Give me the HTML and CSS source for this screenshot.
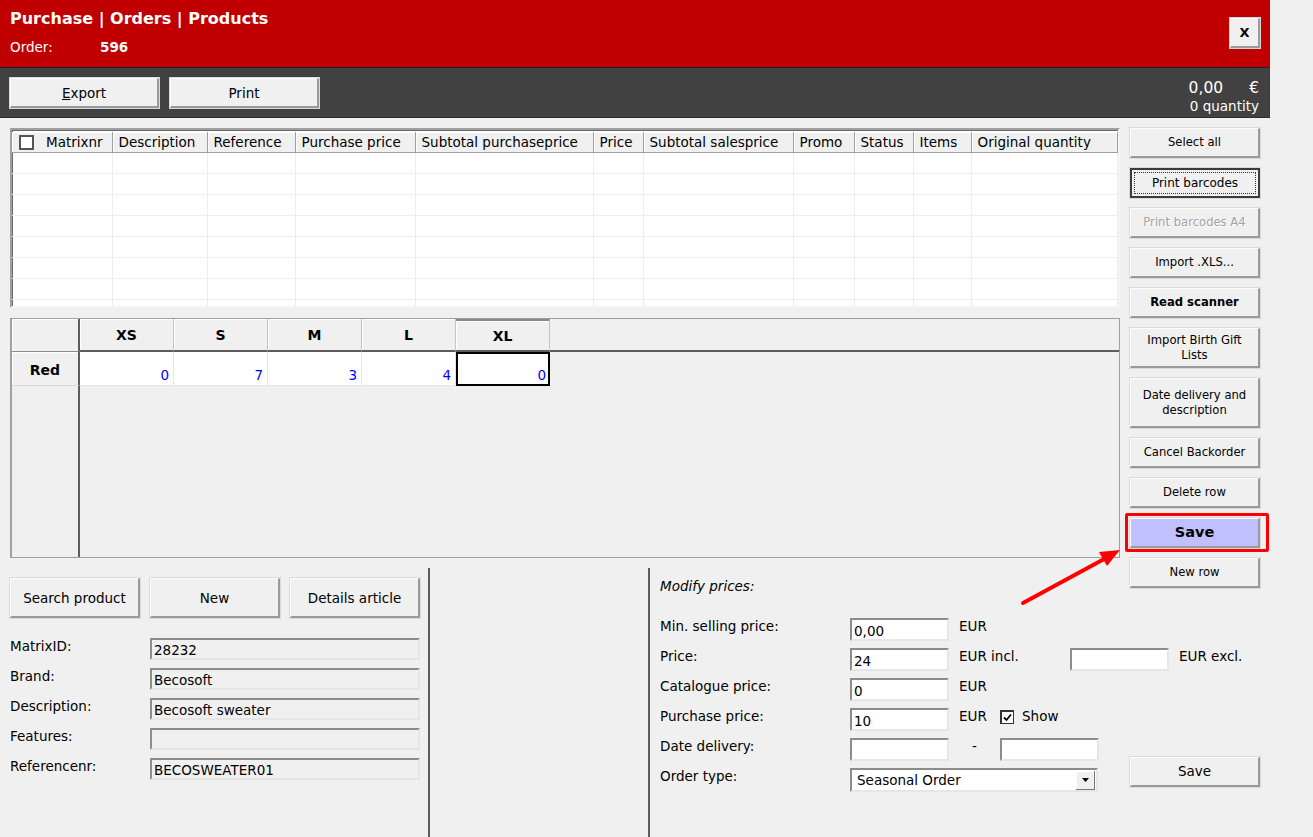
FILE: index.html
```html
<!DOCTYPE html>
<html lang="en">
  <head>
    <meta charset="UTF-8" />
    <meta name="viewport" content="width=device-width, initial-scale=1.0" />
    <link rel="stylesheet" href="styles.css">
  </head>
  <body>
    <div class="window">
      <header class="titlebar">
        <div class="titles">
          <div class="title">Purchase | Orders | Products</div>
          <div class="order"><span class="order-label">Order:</span><b>596</b></div>
        </div>
        <button class="btn close">X</button>
      </header>

      <div class="toolbar">
        <button class="btn wide"><u>E</u>xport</button>
        <button class="btn wide">Print</button>
        <div class="totals">
          <div class="amount"><span>0,00</span><span class="cur">€</span></div>
          <div>0 quantity</div>
        </div>
      </div>

      <main class="content">
        <div class="lines">
          <table class="grid">
            <colgroup>
              <col style="width:100px"><col style="width:95px"><col style="width:88px">
              <col style="width:120px"><col style="width:178px"><col style="width:50px">
              <col style="width:150px"><col style="width:61px"><col style="width:59px">
              <col style="width:58px"><col>
            </colgroup>
            <thead>
              <tr>
                <th class="first"><span class="box"></span>Matrixnr</th>
                <th>Description</th>
                <th>Reference</th>
                <th>Purchase price</th>
                <th>Subtotal purchaseprice</th>
                <th>Price</th>
                <th>Subtotal salesprice</th>
                <th>Promo</th>
                <th>Status</th>
                <th>Items</th>
                <th>Original quantity</th>
              </tr>
            </thead>
            <tbody>
              <tr><td></td><td></td><td></td><td></td><td></td><td></td><td></td><td></td><td></td><td></td><td></td></tr>
              <tr><td></td><td></td><td></td><td></td><td></td><td></td><td></td><td></td><td></td><td></td><td></td></tr>
              <tr><td></td><td></td><td></td><td></td><td></td><td></td><td></td><td></td><td></td><td></td><td></td></tr>
              <tr><td></td><td></td><td></td><td></td><td></td><td></td><td></td><td></td><td></td><td></td><td></td></tr>
              <tr><td></td><td></td><td></td><td></td><td></td><td></td><td></td><td></td><td></td><td></td><td></td></tr>
              <tr><td></td><td></td><td></td><td></td><td></td><td></td><td></td><td></td><td></td><td></td><td></td></tr>
              <tr><td></td><td></td><td></td><td></td><td></td><td></td><td></td><td></td><td></td><td></td><td></td></tr>
              <tr><td></td><td></td><td></td><td></td><td></td><td></td><td></td><td></td><td></td><td></td><td></td></tr>
            </tbody>
          </table>
        </div>

        <div class="tools">
          <button class="btn tool">Select all</button>
          <button class="btn tool focused">Print barcodes</button>
          <button class="btn tool disabled">Print barcodes A4</button>
          <button class="btn tool">Import .XLS...</button>
          <button class="btn tool strong">Read scanner</button>
          <button class="btn tool two">Import Birth Gift Lists</button>
          <button class="btn tool three">Date delivery and description</button>
          <button class="btn tool">Cancel Backorder</button>
          <button class="btn tool">Delete row</button>
          <button class="btn tool save">Save</button>
          <button class="btn tool">New row</button>
        </div>

        <div class="matrix">
          <div class="corner"></div>
          <div class="size">XS</div>
          <div class="size">S</div>
          <div class="size">M</div>
          <div class="size">L</div>
          <div class="size current">XL</div>
          <div class="size-rest"></div>

          <div class="colour">Red</div>
          <div class="qty">0</div>
          <div class="qty">7</div>
          <div class="qty">3</div>
          <div class="qty">4</div>
          <div class="qty active">0</div>
          <div class="qty-rest"></div>

          <div class="colour-rest"></div>
          <div class="empty"></div>
        </div>

        <section class="details">
          <div class="product">
            <div class="product-buttons">
              <button class="btn big">Search product</button>
              <button class="btn big">New</button>
              <button class="btn big">Details article</button>
            </div>
            <div class="frow"><label>MatrixID:</label><div class="field ro">28232</div></div>
            <div class="frow"><label>Brand:</label><div class="field ro">Becosoft</div></div>
            <div class="frow"><label>Description:</label><div class="field ro">Becosoft sweater</div></div>
            <div class="frow"><label>Features:</label><div class="field ro"></div></div>
            <div class="frow"><label>Referencenr:</label><div class="field ro">BECOSWEATER01</div></div>
          </div>

          <div class="spacer"></div>

          <div class="prices">
            <div class="caption">Modify prices:</div>
            <div class="prow">
              <label>Min. selling price:</label>
              <div class="field">0,00</div>
              <span class="unit">EUR</span>
            </div>
            <div class="prow">
              <label>Price:</label>
              <div class="field">24</div>
              <span class="unit incl">EUR incl.</span>
              <div class="field"></div>
              <span class="unit">EUR excl.</span>
            </div>
            <div class="prow">
              <label>Catalogue price:</label>
              <div class="field">0</div>
              <span class="unit">EUR</span>
            </div>
            <div class="prow">
              <label>Purchase price:</label>
              <div class="field">10</div>
              <span class="unit short">EUR</span>
              <span class="check">
                <svg width="9" height="9" viewBox="0 0 9 9"><path d="M1 4.5 L3.5 7 L8 1.5" fill="none" stroke="#000" stroke-width="1.8"/></svg>
              </span>
              <span class="show">Show</span>
            </div>
            <div class="prow">
              <label>Date delivery:</label>
              <div class="field"></div>
              <span class="dash">-</span>
              <div class="field"></div>
            </div>
            <div class="prow">
              <label>Order type:</label>
              <div class="select">
                <span>Seasonal Order</span>
                <span class="drop"><svg width="7" height="4" viewBox="0 0 7 4"><path d="M0 0 H7 L3.5 4 Z" fill="#000"/></svg></span>
              </div>
              <button class="btn tool save-bottom">Save</button>
            </div>
          </div>
        </section>
      </main>
    </div>

    <svg class="arrow" width="1313" height="837" viewBox="0 0 1313 837">
      <line x1="1023" y1="603" x2="1106" y2="558" stroke="#ff0000" stroke-width="4" stroke-linecap="round"/>
      <polygon points="1120,550 1107,566 1099,552" fill="#ff0000"/>
    </svg>
  </body>
</html>
```

FILE: styles.css
```css
body {
  margin: 0;
  background-color: #f0f0f0;
  font-family: "DejaVu Sans", Verdana, sans-serif;
  font-size: 13.5px;
  color: #000;
  overflow: hidden;
  height: 837px;
  position: relative;
}

.window {
  width: 1270px;
}

.btn {
  font-family: "DejaVu Sans", Verdana, sans-serif;
  font-size: 13.5px;
  color: #000;
  background-color: #f0f0f0;
  border-style: solid;
  border-width: 1px 2px 2px 1px;
  border-color: #fdfdfd #9a9a9a #9a9a9a #fdfdfd;
  box-shadow: 0 0 0 1px #dadada;
  padding: 0;
  cursor: pointer;
}

/* title */
.titlebar {
  height: 68px;
  box-sizing: border-box;
  background-color: #c00000;
  border-bottom: 1px solid #1e1e1e;
  border-right: 1px solid #3a3a3a;
  display: flex;
  justify-content: space-between;
  padding: 0 10px;
  color: #fff;
}
.titles {
  padding-top: 9px;
}
.title {
  font-size: 16px;
  font-weight: bold;
  line-height: 20px;
  margin-bottom: 9px;
}
.order {
  line-height: 18px;
}
.order-label {
  display: inline-block;
  width: 90px;
}
.close {
  width: 30px;
  height: 30px;
  margin-top: 18px;
  margin-right: -1px;
  font-weight: bold;
  font-size: 13px;
}

/* toolbar */
.toolbar {
  height: 50px;
  box-sizing: border-box;
  background-color: #414141;
  border-bottom: 1px solid #2c2c2c;
  border-right: 1px solid #3a3a3a;
  display: flex;
  align-items: flex-start;
  gap: 11px;
  padding: 10px 10px 0;
}
.wide {
  width: 149px;
  height: 30px;
}
.totals {
  margin-left: auto;
  color: #fff;
  text-align: right;
  margin-top: 1px;
}
.amount {
  font-size: 15.5px;
  line-height: 19px;
}
.cur {
  margin-left: 26px;
}
.totals div + div {
  line-height: 17px;
}

/* main layout */
.content {
  display: grid;
  grid-template-columns: 1110px 130px;
  grid-template-rows: 180px 240px auto;
  column-gap: 10px;
  row-gap: 10px;
  padding: 10px 10px 0;
}

/* order lines table */
.lines {
  grid-column: 1;
  grid-row: 1;
  background-color: #fff;
  border: 2px solid;
  border-color: #a0a0a0 #f4f4f4 #f4f4f4 #a0a0a0;
  box-shadow: inset 1px 1px #696969;
  padding-top: 2px;
  overflow: hidden;
}
.grid {
  border-collapse: collapse;
  table-layout: fixed;
  width: 1106px;
}
.grid th {
  height: 20px;
  padding: 0 0 0 6px;
  font-weight: normal;
  text-align: left;
  white-space: nowrap;
  background-color: #f0f0f0;
  border-right: 1px solid #a0a0a0;
  border-bottom: 1px solid #a0a0a0;
  box-shadow: inset 1px 1px #fff;
}
.grid th.first {
  padding-left: 7px;
}
.box {
  display: inline-block;
  width: 11px;
  height: 11px;
  border: 2px solid #555;
  background-color: #fff;
  vertical-align: -3px;
  margin-right: 12px;
}
.grid td {
  height: 20px;
  padding: 0;
  border-right: 1px solid #eeeeee;
  border-bottom: 1px solid #eeeeee;
}

/* side buttons */
.tools {
  grid-column: 2;
  grid-row: 1 / 3;
  align-self: start;
  display: flex;
  flex-direction: column;
  gap: 10px;
}
.tool {
  flex-shrink: 0;
  width: 130px;
  height: 30px;
  font-size: 11.6px;
  line-height: 15px;
}
.tool.two {
  height: 40px;
  padding: 0 6px;
}
.tool.three {
  height: 50px;
  padding: 0 6px;
}
.tool.strong {
  font-weight: bold;
}
.tool.focused {
  border: 2px solid #3c3c3c;
  outline: 1px dotted #333;
  outline-offset: -5px;
  font-size: 12px;
}
.tool.disabled {
  color: #a3a3a3;
  text-shadow: 1px 1px #fff;
}
.tool.save {
  position: relative;
  background-color: #c0c0ff;
  font-weight: bold;
  font-size: 14.5px;
}
.tool.save::after {
  content: "";
  position: absolute;
  top: -6px;
  left: -6px;
  right: -11px;
  bottom: -6px;
  border: 3px solid #ff0000;
  border-radius: 2px;
}

/* size matrix */
.matrix {
  grid-column: 1;
  grid-row: 2;
  display: grid;
  grid-template-columns: 68px repeat(5, 94px) 1fr;
  grid-template-rows: 33px 34px 1fr;
  border: 1px solid #a0a0a0;
  border-left-width: 2px;
}
.corner {
  background-color: #f0f0f0;
  border-right: 2px solid #5c5c5c;
  border-bottom: 1px solid #8a8a8a;
  box-shadow: inset 1px 1px #fff;
}
.size {
  display: flex;
  align-items: center;
  justify-content: center;
  font-weight: bold;
  font-size: 14px;
  background-color: #f0f0f0;
  border-right: 1px solid #c4c4c4;
  border-bottom: 2px solid #5c5c5c;
  box-shadow: inset 1px 1px #fff;
}
.size.current {
  border-top: 2px solid #8a8a8a;
}
.size-rest {
  border-bottom: 2px solid #5c5c5c;
}
.colour {
  display: flex;
  align-items: center;
  justify-content: center;
  font-weight: bold;
  font-size: 14px;
  padding-top: 2px;
  border-right: 2px solid #5c5c5c;
  border-bottom: 1px solid #d8d8d8;
  box-shadow: inset 1px 1px #fff;
}
.qty {
  display: flex;
  align-items: flex-end;
  justify-content: flex-end;
  padding: 0 4px 2px 0;
  background-color: #fff;
  color: #0000ff;
  border-right: 1px solid #e4e4e4;
  border-bottom: 1px solid #e4e4e4;
}
.qty.active {
  border: 2px solid #000;
  padding-right: 2px;
  padding-bottom: 1px;
}
.colour-rest {
  border-right: 2px solid #5c5c5c;
}
.empty {
  grid-column: 2 / -1;
}

/* lower panels */
.details {
  grid-column: 1 / -1;
  grid-row: 3;
  display: flex;
  height: 269px;
}
.product {
  width: 418px;
  border-right: 2px solid #5c5c5c;
  padding-top: 10px;
}
.product-buttons {
  display: flex;
  gap: 10px;
  margin-bottom: 20px;
}
.big {
  width: 130px;
  height: 40px;
}
.frow {
  display: flex;
  align-items: flex-start;
  height: 22px;
  margin-bottom: 8px;
}
.frow label {
  width: 140px;
  line-height: 16px;
}
.field {
  box-sizing: border-box;
  width: 99px;
  height: 23px;
  padding: 3px 0 0 2px;
  background-color: #fff;
  border: 2px solid;
  border-color: #8c8c8c #e6e6e6 #e6e6e6 #8c8c8c;
  line-height: 17px;
  white-space: nowrap;
}
.field.ro {
  width: 270px;
  height: 22px;
  padding-top: 2px;
  background-color: #f0f0f0;
}
.spacer {
  width: 218px;
  border-right: 2px solid #5c5c5c;
}
.prices {
  padding: 10px 0 0 10px;
  flex: 1;
}
.caption {
  font-style: italic;
  line-height: 16px;
  margin-bottom: 24px;
}
.prow {
  display: flex;
  align-items: flex-start;
  height: 23px;
  margin-bottom: 7px;
}
.prow label {
  width: 190px;
  line-height: 16px;
}
.unit {
  margin-left: 10px;
  line-height: 16px;
}
.unit.incl {
  width: 111px;
}
.unit.short {
  width: 41px;
}
.check {
  box-sizing: border-box;
  width: 14px;
  height: 14px;
  margin-top: 2px;
  border: 1px solid #333;
  border-top-width: 2px;
  border-left-width: 2px;
  background-color: #fff;
  display: flex;
  align-items: center;
  justify-content: center;
}
.show {
  margin-left: 8px;
  line-height: 16px;
}
.dash {
  width: 51px;
  text-align: center;
  line-height: 16px;
}
.select {
  box-sizing: border-box;
  width: 248px;
  height: 24px;
  background-color: #fff;
  border: 2px solid;
  border-color: #8c8c8c #e6e6e6 #e6e6e6 #8c8c8c;
  display: flex;
  align-items: center;
  justify-content: space-between;
  padding-left: 5px;
}
.drop {
  width: 18px;
  height: 18px;
  margin-right: 1px;
  background-color: #f0f0f0;
  border-right: 1px solid #777;
  border-bottom: 1px solid #777;
  box-shadow: inset 1px 1px #fff;
  display: flex;
  align-items: center;
  justify-content: center;
}
.save-bottom {
  margin-left: 32px;
  margin-top: -11px;
  font-size: 13.5px;
}

.arrow {
  position: absolute;
  left: 0;
  top: 0;
  pointer-events: none;
}
```
